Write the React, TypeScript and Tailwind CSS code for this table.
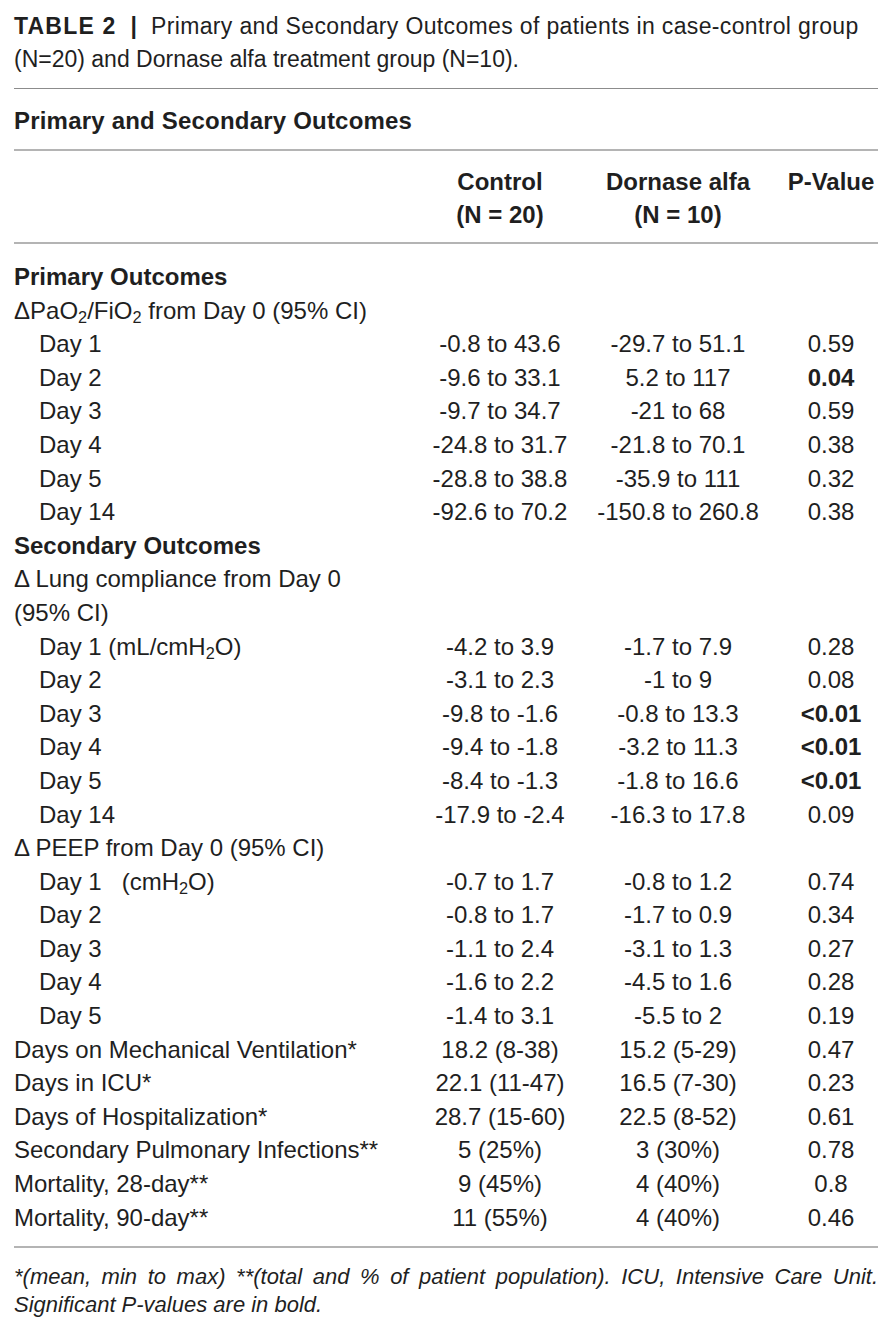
import React from "react";

type Row = {
  label: React.ReactNode;
  indent?: boolean;
  head?: boolean;
  c?: string;
  d?: string;
  p?: string;
  bold?: boolean;
};

const O2 = (
  <>
    O<sub className="text-[0.68em]">2</sub>
  </>
);

const rows: Row[] = [
  { label: "Primary Outcomes", head: true },
  {
    label: (
      <>
        ΔPa{O2}/Fi{O2} from Day 0 (95% CI)
      </>
    ),
  },
  { label: "Day 1", indent: true, c: "-0.8 to 43.6", d: "-29.7 to 51.1", p: "0.59" },
  { label: "Day 2", indent: true, c: "-9.6 to 33.1", d: "5.2 to 117", p: "0.04", bold: true },
  { label: "Day 3", indent: true, c: "-9.7 to 34.7", d: "-21 to 68", p: "0.59" },
  { label: "Day 4", indent: true, c: "-24.8 to 31.7", d: "-21.8 to 70.1", p: "0.38" },
  { label: "Day 5", indent: true, c: "-28.8 to 38.8", d: "-35.9 to 111", p: "0.32" },
  { label: "Day 14", indent: true, c: "-92.6 to 70.2", d: "-150.8 to 260.8", p: "0.38" },
  { label: "Secondary Outcomes", head: true },
  { label: "Δ Lung compliance from Day 0" },
  { label: "(95% CI)" },
  {
    label: (
      <>
        Day 1 (mL/cmH<sub className="text-[0.68em]">2</sub>O)
      </>
    ),
    indent: true,
    c: "-4.2 to 3.9",
    d: "-1.7 to 7.9",
    p: "0.28",
  },
  { label: "Day 2", indent: true, c: "-3.1 to 2.3", d: "-1 to 9", p: "0.08" },
  { label: "Day 3", indent: true, c: "-9.8 to -1.6", d: "-0.8 to 13.3", p: "<0.01", bold: true },
  { label: "Day 4", indent: true, c: "-9.4 to -1.8", d: "-3.2 to 11.3", p: "<0.01", bold: true },
  { label: "Day 5", indent: true, c: "-8.4 to -1.3", d: "-1.8 to 16.6", p: "<0.01", bold: true },
  { label: "Day 14", indent: true, c: "-17.9 to -2.4", d: "-16.3 to 17.8", p: "0.09" },
  { label: "Δ PEEP from Day 0 (95% CI)" },
  {
    label: (
      <>
        {"Day 1   (cmH"}
        <sub className="text-[0.68em]">2</sub>O)
      </>
    ),
    indent: true,
    c: "-0.7 to 1.7",
    d: "-0.8 to 1.2",
    p: "0.74",
  },
  { label: "Day 2", indent: true, c: "-0.8 to 1.7", d: "-1.7 to 0.9", p: "0.34" },
  { label: "Day 3", indent: true, c: "-1.1 to 2.4", d: "-3.1 to 1.3", p: "0.27" },
  { label: "Day 4", indent: true, c: "-1.6 to 2.2", d: "-4.5 to 1.6", p: "0.28" },
  { label: "Day 5", indent: true, c: "-1.4 to 3.1", d: "-5.5 to 2", p: "0.19" },
  { label: "Days on Mechanical Ventilation*", c: "18.2 (8-38)", d: "15.2 (5-29)", p: "0.47" },
  { label: "Days in ICU*", c: "22.1 (11-47)", d: "16.5 (7-30)", p: "0.23" },
  { label: "Days of Hospitalization*", c: "28.7 (15-60)", d: "22.5 (8-52)", p: "0.61" },
  { label: "Secondary Pulmonary Infections**", c: "5 (25%)", d: "3 (30%)", p: "0.78" },
  { label: "Mortality, 28-day**", c: "9 (45%)", d: "4 (40%)", p: "0.8" },
  { label: "Mortality, 90-day**", c: "11 (55%)", d: "4 (40%)", p: "0.46" },
];

export default function App() {
  return (
    <div
      className="w-[896px] min-h-[1332px] bg-white text-[#1f1f1f] pl-[14px] pt-[10px]"
      style={{ fontFamily: '"Liberation Sans", Arial, Helvetica, sans-serif' }}
    >
      {/* Caption */}
      <div className="text-[23px] leading-[33px] w-[864px]">
        <div className="whitespace-nowrap">
          <span className="font-bold tracking-[1.2px]">TABLE 2</span>
          <span className="font-bold mx-[14px]">|</span>
          <span className="tracking-[0.35px]">Primary and Secondary Outcomes of patients in case-control group</span>
        </div>
        <div>(N=20) and Dornase alfa treatment group (N=10).</div>
      </div>

      <div className="mt-[12px] w-[864px] h-px bg-[#8c8c8c]" />

      {/* Section title */}
      <div className="pt-[15px] pb-[12px] text-[24px] leading-[33px] font-bold tracking-[0.2px]">
        Primary and Secondary Outcomes
      </div>

      <div className="w-[864px] h-[2px] bg-[#b4b4b4]" />

      {/* Header */}
      <div className="grid grid-cols-[396px_180px_176px_130px] pt-[14px] pb-[11px] text-[24px] leading-[33px] font-bold">
        <div />
        <div className="text-center">
          Control
          <br />
          (N = 20)
        </div>
        <div className="text-center">
          Dornase alfa
          <br />
          (N = 10)
        </div>
        <div className="text-center">P-Value</div>
      </div>

      <div className="w-[864px] h-[2px] bg-[#b4b4b4]" />

      {/* Body */}
      <div className="pt-[16px] pb-[12px] text-[24px] leading-[33.6px]">
        {rows.map((r, i) => (
          <div key={i} className="grid grid-cols-[396px_180px_176px_130px]">
            <div
              className={
                "whitespace-pre " +
                (r.indent ? "pl-[25px] " : "") +
                (r.head ? "font-bold" : "")
              }
            >
              {r.label}
            </div>
            <div className="text-center whitespace-nowrap">{r.c ?? ""}</div>
            <div className="text-center whitespace-nowrap">{r.d ?? ""}</div>
            <div className={"text-center " + (r.bold ? "font-bold" : "")}>{r.p ?? ""}</div>
          </div>
        ))}
      </div>

      <div className="w-[864px] h-[2px] bg-[#b4b4b4]" />

      {/* Footnote */}
      <div className="pt-[15px] w-[864px] text-[22px] leading-[28px] italic">
        <div className="text-justify [text-align-last:justify]">
          *(mean, min to max) **(total and % of patient population). ICU, Intensive Care Unit.
        </div>
        <div>Significant P-values are in bold.</div>
      </div>
    </div>
  );
}
